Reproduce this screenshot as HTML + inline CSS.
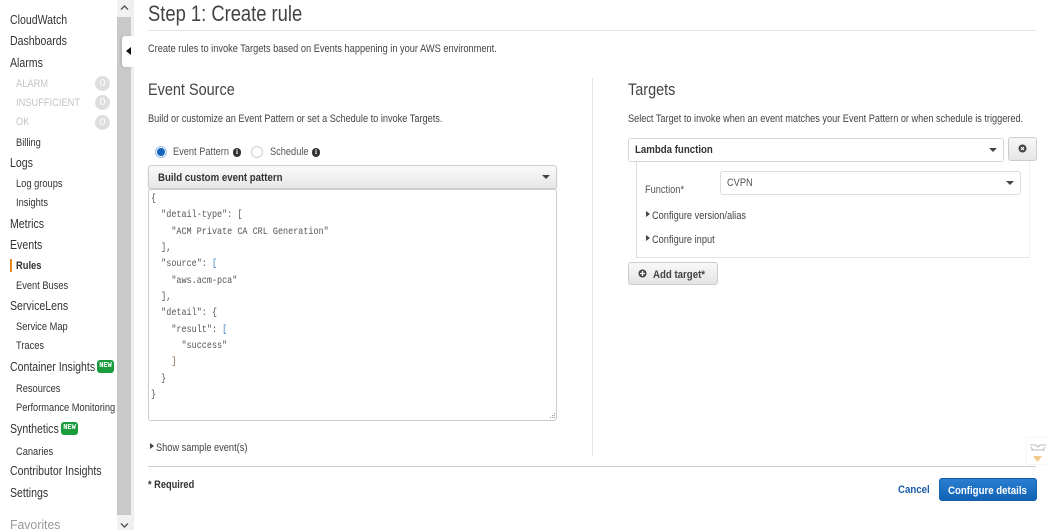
<!DOCTYPE html>
<html><head><meta charset="utf-8"><style>
html,body{margin:0;padding:0;width:1048px;height:530px;overflow:hidden;background:#fff}
body{position:relative;font-family:"Liberation Sans",sans-serif;color:#444}
.t{position:absolute;white-space:nowrap;line-height:16px;height:16px;transform-origin:0 50%;transform:scaleX(.92)}
.n{font-size:12.5px;color:#333;transform:scaleX(.845)}
.s{font-size:11px;color:#333;transform:scaleX(.845);margin-top:1px}
.d{font-size:11px;color:#c4c4c4;transform:scaleX(.845)}
.b{position:absolute;left:95px;width:15px;height:15px;border-radius:8px;background:#dedede;color:#fff;font-size:10px;line-height:15px;text-align:center}
.new{position:absolute;height:13px;width:17px;background:#1a9c3e;border-radius:3px;color:#fff;font:bold 7px/13px "Liberation Mono",monospace;text-align:center}
.box{position:absolute;box-sizing:border-box}
.h2{font-size:17px;color:#444;transform:scaleX(.85);margin-top:1px}
.p{font-size:11px;color:#444;transform:scaleX(.84);margin-top:1px}
.bd{font-size:11px;font-weight:bold;color:#333;transform:scaleX(.878);margin-top:1px}
.code{position:absolute;left:151px;margin:0;font:10.5px/16.35px "Liberation Mono",monospace;color:#555;transform-origin:0 0;transform:scaleX(.806);top:191px;white-space:pre}
.tri{position:absolute;width:0;height:0;border-left:4px solid #444;border-top:3.5px solid transparent;border-bottom:3.5px solid transparent}
.caret{position:absolute;width:0;height:0;border-top:4px solid #444;border-left:4px solid transparent;border-right:4px solid transparent}
.i{position:absolute;width:8px;height:9px;border-radius:5px;background:#333;color:#fff;font:bold 7px/9px "Liberation Serif",serif;text-align:center}
</style></head><body>
<div class="t n" style="left:10px;top:12px">CloudWatch</div>
<div class="t n" style="left:10px;top:33px">Dashboards</div>
<div class="t n" style="left:10px;top:55px">Alarms</div>
<div class="t d" style="left:16px;top:76px">ALARM</div><div class="b" style="top:76px">0</div>
<div class="t d" style="left:16px;top:95px">INSUFFICIENT</div><div class="b" style="top:95px">0</div>
<div class="t d" style="left:16px;top:114px">OK</div><div class="b" style="top:115px">0</div>
<div class="t s" style="left:16px;top:134px">Billing</div>
<div class="t n" style="left:10px;top:155px">Logs</div>
<div class="t s" style="left:16px;top:175px">Log groups</div>
<div class="t s" style="left:16px;top:194px">Insights</div>
<div class="t n" style="left:10px;top:216px">Metrics</div>
<div class="t n" style="left:10px;top:237px">Events</div>
<div class="box" style="left:10px;top:259px;width:2px;height:13px;background:#e8891c"></div>
<div class="t s" style="left:16px;top:257px;font-weight:bold;transform:scaleX(.85)">Rules</div>
<div class="t s" style="left:16px;top:277px">Event Buses</div>
<div class="t n" style="left:10px;top:298px">ServiceLens</div>
<div class="t s" style="left:16px;top:318px">Service Map</div>
<div class="t s" style="left:16px;top:337px">Traces</div>
<div class="t n" style="left:10px;top:359px">Container Insights</div><div class="new" style="left:97px;top:360px">NEW</div>
<div class="t s" style="left:16px;top:380px">Resources</div>
<div class="t s" style="left:16px;top:399px">Performance Monitoring</div>
<div class="t n" style="left:10px;top:421px">Synthetics</div><div class="new" style="left:61px;top:422px">NEW</div>
<div class="t s" style="left:16px;top:443px">Canaries</div>
<div class="t n" style="left:10px;top:463px">Contributor Insights</div>
<div class="t n" style="left:10px;top:485px">Settings</div>
<div class="t n" style="left:10px;top:517px;color:#999;transform:scaleX(.98)">Favorites</div>

<div class="box" style="left:117px;top:0;width:14px;height:530px;background:#f1f1f1"></div>
<div class="box" style="left:117px;top:17px;width:14px;height:498px;background:#c9c9c9"></div>
<div class="box" style="left:131px;top:0;width:3px;height:530px;background:#efefef"></div>
<svg style="position:absolute;left:119px;top:4px" width="11" height="7"><path d="M2 5.5L5.5 2L9 5.5" fill="none" stroke="#555" stroke-width="1.4"/></svg>
<svg style="position:absolute;left:119px;top:522px" width="11" height="7"><path d="M2 1.5L5.5 5L9 1.5" fill="none" stroke="#555" stroke-width="1.4"/></svg>
<div class="box" style="left:122px;top:36px;width:12px;height:31px;background:#fff;border-radius:3px 0 0 3px;box-shadow:-1px 0 2px rgba(0,0,0,.12)"></div>
<div class="box" style="left:126px;top:47px;border-right:5px solid #111;border-top:4.5px solid transparent;border-bottom:4.5px solid transparent"></div>

<div class="t" style="left:148px;top:2px;height:24px;line-height:24px;font-size:22px;color:#444;transform:scaleX(.835)">Step 1: Create rule</div>
<div class="box" style="left:148px;top:30px;width:888px;height:1px;background:#e4e4e4"></div>
<div class="t p" style="left:148px;top:40px">Create rules to invoke Targets based on Events happening in your AWS environment.</div>

<div class="t h2" style="left:148px;top:81px">Event Source</div>
<div class="t p" style="left:148px;top:110px;transform:scaleX(.835)">Build or customize an Event Pattern or set a Schedule to invoke Targets.</div>

<div class="box" style="left:155px;top:146px;width:12px;height:12px;border-radius:50%;background:#1166bb;border:1px solid #a9c6e4;box-shadow:inset 0 0 0 1px #fff"></div>
<div class="t p" style="left:173px;top:143px;color:#555">Event Pattern</div>
<div class="i" style="left:233px;top:148px">i</div>
<div class="box" style="left:251px;top:146px;width:12px;height:12px;border-radius:50%;background:#fff;border:1px solid #ccc"></div>
<div class="t p" style="left:270px;top:143px;color:#555">Schedule</div>
<div class="i" style="left:312px;top:148px">i</div>

<div class="box" style="left:148px;top:165px;width:409px;height:24px;border:1px solid #ccc;border-radius:3px;background:linear-gradient(#fafafa,#e6e6e6);box-shadow:0 1px 1px rgba(0,0,0,.15)"></div>
<div class="t bd" style="left:158px;top:169px">Build custom event pattern</div>
<div class="caret" style="left:542px;top:175px"></div>

<div class="box" style="left:148px;top:189px;width:409px;height:232px;border:1px solid #ccc;border-radius:3px;background:#fff"></div>
<pre class="code">{
  "detail-type": [
    "ACM Private CA CRL Generation"
  ],
  "source": <span style="color:#3a7fc4">[</span>
    "aws.acm-pca"
  ],
  "detail": {
    "result": <span style="color:#3a7fc4">[</span>
      "success"
    <span style="color:#8a6a50">]</span>
  }
}</pre>
<svg style="position:absolute;left:548px;top:412px" width="8" height="8"><path d="M6.5 1v1M6.5 3v1M6.5 5v1M4.5 3v1M4.5 5v1M2.5 5v1" fill="none" stroke="#999" stroke-width="1"/></svg>

<div class="tri" style="left:150px;top:443px"></div>
<div class="t p" style="left:156px;top:439px">Show sample event(s)</div>

<div class="box" style="left:592px;top:78px;width:1px;height:378px;background:#e4e4e4"></div>

<div class="t h2" style="left:628px;top:81px">Targets</div>
<div class="t p" style="left:628px;top:110px;transform:scaleX(.833)">Select Target to invoke when an event matches your Event Pattern or when schedule is triggered.</div>

<div class="box" style="left:636px;top:160px;width:394px;height:98px;border-left:1px solid #ddd;border-bottom:1px solid #e6e6e6;border-right:1px solid #f2f2f2"></div>
<div class="box" style="left:628px;top:138px;width:376px;height:24px;border:1px solid #d5d5d5;border-radius:3px;background:#fff"></div>
<div class="t bd" style="left:635px;top:141px">Lambda function</div>
<div class="caret" style="left:989px;top:148px"></div>
<div class="box" style="left:1008px;top:137px;width:29px;height:24px;border:1px solid #ccc;border-radius:3px;background:linear-gradient(#f8f8f8,#e6e6e6)"></div>
<svg style="position:absolute;left:1018px;top:144px" width="9" height="9"><circle cx="4.5" cy="4.5" r="4" fill="#444"/><path d="M3 3L6 6M6 3L3 6" stroke="#fff" stroke-width="1.2"/></svg>

<div class="t p" style="left:645px;top:181px;color:#555">Function*</div>
<div class="box" style="left:720px;top:171px;width:301px;height:24px;border:1px solid #ddd;border-radius:3px;background:#fff"></div>
<div class="t p" style="left:727px;top:174px;color:#555">CVPN</div>
<div class="caret" style="left:1006px;top:181px"></div>
<div class="tri" style="left:646px;top:211px"></div>
<div class="t p" style="left:652px;top:207px">Configure version/alias</div>
<div class="tri" style="left:646px;top:235px"></div>
<div class="t p" style="left:652px;top:231px">Configure input</div>

<div class="box" style="left:628px;top:262px;width:90px;height:23px;border:1px solid #ccc;border-radius:3px;background:linear-gradient(#f8f8f8,#e4e4e4)"></div>
<svg style="position:absolute;left:638px;top:269px" width="9" height="9"><circle cx="4.5" cy="4.5" r="4" fill="#444"/><path d="M4.5 2V7M2 4.5H7" stroke="#fff" stroke-width="1.3"/></svg>
<div class="t bd" style="left:653px;top:266px;color:#444">Add target*</div>

<div class="box" style="left:1027px;top:438px;width:21px;height:26px;background:#fff;box-shadow:0 0 2px rgba(0,0,0,.12)"></div>
<svg style="position:absolute;left:1028px;top:442px" width="19" height="22"><path d="M2 3H8L10 5L12 3H18M3 8H17M3 5L5 8M17 5L15 8" fill="none" stroke="#bbb" stroke-width="1"/><path d="M5 14H14L9.500 20Z" fill="#f5c98e"/></svg>

<div class="box" style="left:148px;top:466px;width:888px;height:1px;background:#ccc"></div>
<div class="t bd" style="left:148px;top:476px;transform:scaleX(.84)">* Required</div>
<div class="t bd" style="left:898px;top:481px;color:#1a5ca8">Cancel</div>
<div class="box" style="left:939px;top:478px;width:98px;height:23px;border-radius:3px;background:linear-gradient(#2a7dd0,#1263b5);border:1px solid #1560ad"></div>
<div class="t bd" style="left:948px;top:482px;color:#fff">Configure details</div>
</body></html>
